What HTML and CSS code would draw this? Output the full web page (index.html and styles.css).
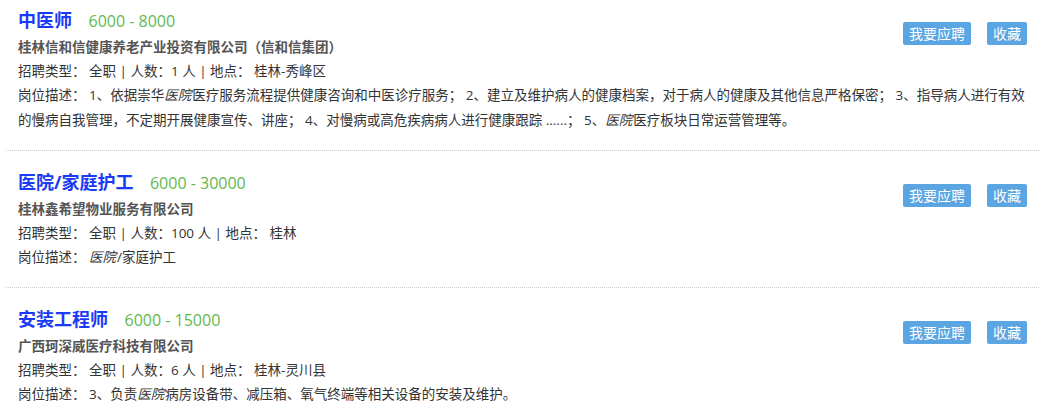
FILE: index.html
```html
<!DOCTYPE html>
<html>
<head>
  <meta charset="utf-8">
  <title>职位列表</title>
  <link rel="stylesheet" href="styles.css">
</head>
<body>

  <ul class="job-list">

    <li class="job-item">
      <div class="job-head">
        <div class="job-main">
          <div class="job-title">
            <a href="#" class="job-name">中医师</a>
            <span class="job-salary">6000 - 8000</span>
          </div>
          <div class="job-company">桂林信和信健康养老产业投资有限公司（信和信集团）</div>
        </div>
        <div class="job-actions">
          <button class="btn">我要应聘</button>
          <button class="btn">收藏</button>
        </div>
      </div>
      <div class="job-info">招聘类型： 全职 | 人数：1 人 | 地点： 桂林-秀峰区</div>
      <div class="job-desc">岗位描述： 1、依据崇华<em>医院</em>医疗服务流程提供健康咨询和中医诊疗服务； 2、建立及维护病人的健康档案，对于病人的健康及其他信息严格保密； 3、指导病人进行有效的慢病自我管理，不定期开展健康宣传、讲座； 4、对慢病或高危疾病病人进行健康跟踪 ......； 5、<em>医院</em>医疗板块日常运营管理等。</div>
    </li>

    <li class="job-item">
      <div class="job-head">
        <div class="job-main">
          <div class="job-title">
            <a href="#" class="job-name">医院/家庭护工</a>
            <span class="job-salary">6000 - 30000</span>
          </div>
          <div class="job-company">桂林鑫希望物业服务有限公司</div>
        </div>
        <div class="job-actions">
          <button class="btn">我要应聘</button>
          <button class="btn">收藏</button>
        </div>
      </div>
      <div class="job-info">招聘类型： 全职 | 人数：100 人 | 地点： 桂林</div>
      <div class="job-desc">岗位描述： <em>医院</em>/家庭护工</div>
    </li>

    <li class="job-item">
      <div class="job-head">
        <div class="job-main">
          <div class="job-title">
            <a href="#" class="job-name">安装工程师</a>
            <span class="job-salary">6000 - 15000</span>
          </div>
          <div class="job-company">广西珂深威医疗科技有限公司</div>
        </div>
        <div class="job-actions">
          <button class="btn">我要应聘</button>
          <button class="btn">收藏</button>
        </div>
      </div>
      <div class="job-info">招聘类型： 全职 | 人数：6 人 | 地点： 桂林-灵川县</div>
      <div class="job-desc">岗位描述： 3、负责<em>医院</em>病房设备带、减压箱、氧气终端等相关设备的安装及维护。</div>
    </li>

  </ul>

</body>
</html>
```

FILE: styles.css
```css
body {
  margin: 0;
  font-family: "Open Sans", "Noto Sans CJK SC", sans-serif;
  font-size: 13.5px;
  color: #333;
  background: #fff;
}

.job-list {
  list-style: none;
  margin: 0;
  padding: 0 0 0 6px;
}

.job-item {
  padding: 18px 12px 17px 12px;
  border-bottom: 1px dotted #ccc;
}

.job-item:first-child {
  padding-top: 7px;
}

.job-head {
  display: flex;
  justify-content: space-between;
  align-items: flex-start;
}

.job-title {
  line-height: 26px;
}

.job-name {
  font-size: 18px;
  font-weight: bold;
  color: #1a3af5;
  text-decoration: none;
}

.job-salary {
  margin-left: 13px;
  font-size: 16px;
  color: #62b84f;
}

.job-company {
  line-height: 24px;
  font-weight: bold;
  color: #555;
}

.job-actions {
  display: flex;
  gap: 16px;
  margin-top: 15px;
}

.btn {
  height: 23px;
  padding: 0 6px;
  border: none;
  border-radius: 2px;
  background: #5ba5e2;
  color: #fff;
  font-family: inherit;
  font-size: 14px;
  line-height: 23px;
  cursor: pointer;
}

.job-info {
  line-height: 24px;
}

.job-desc {
  line-height: 25px;
}

.job-desc em {
  padding-right: 1px;
}
```
